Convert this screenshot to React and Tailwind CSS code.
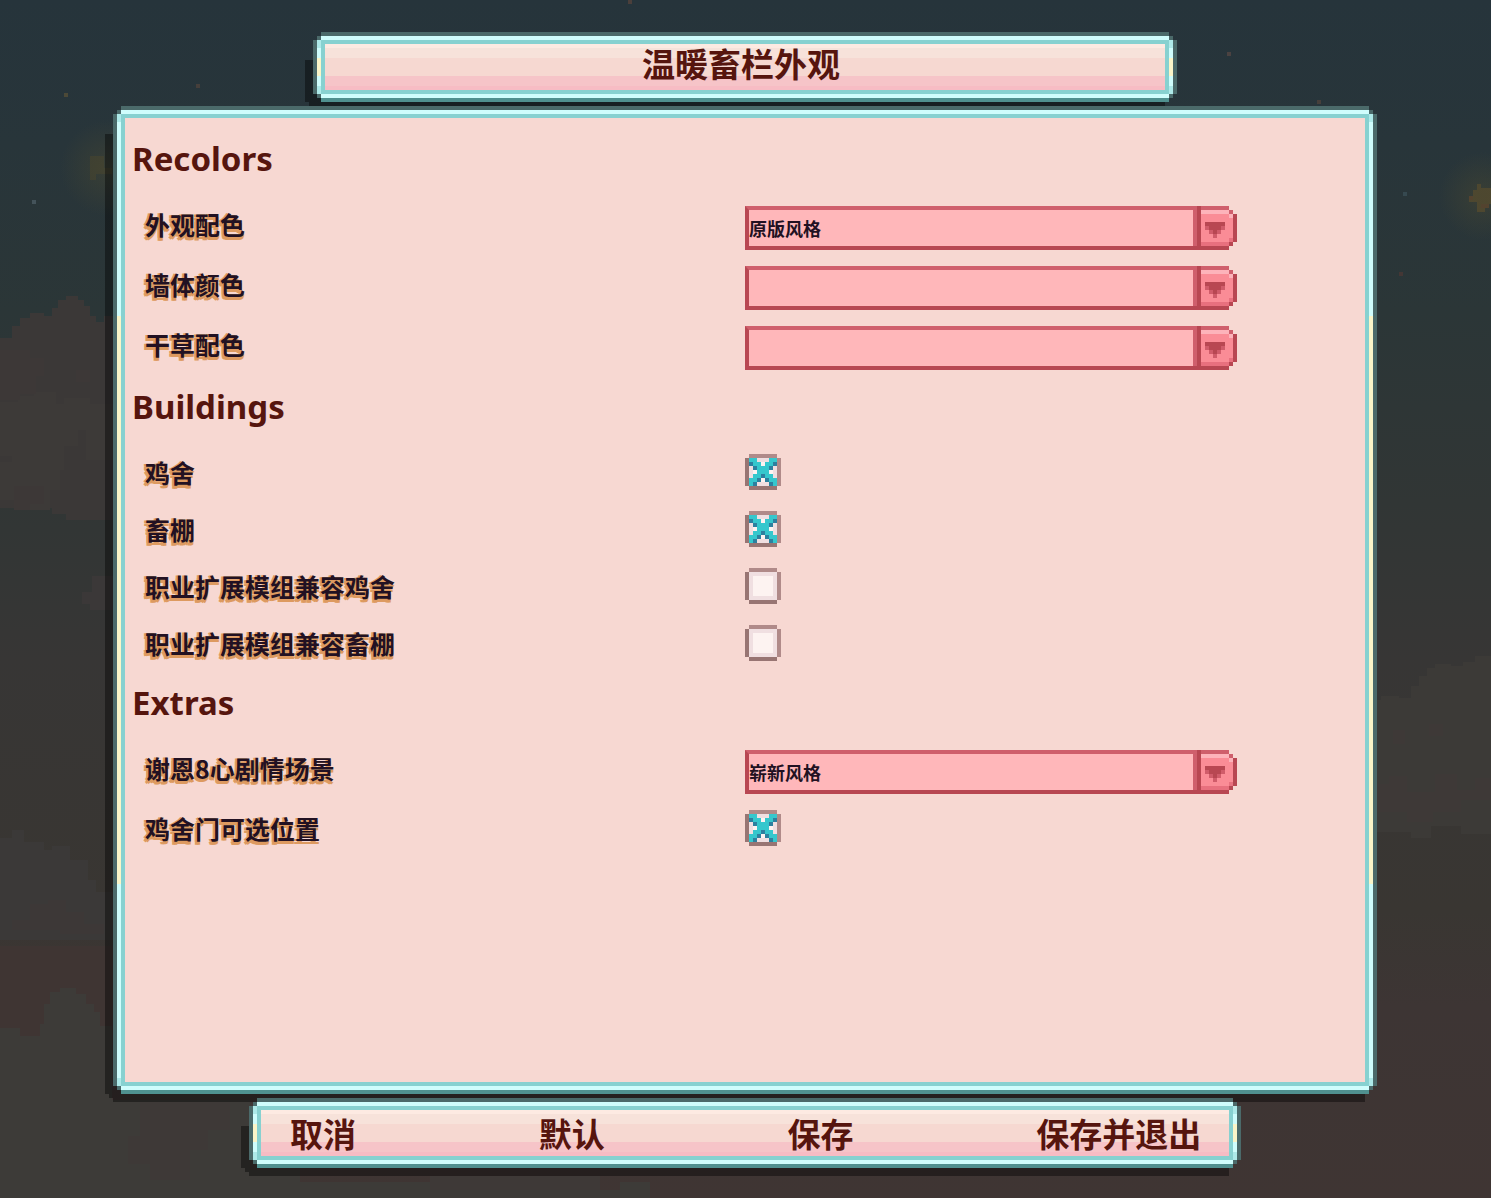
import { useState } from 'react'

const SECTIONS = [
  {
    title: 'Recolors',
    options: [
      { id: 'palette', type: 'select', label: '外观配色', value: '原版风格', choices: ['原版风格', '崭新风格'] },
      { id: 'wall', type: 'select', label: '墙体颜色', value: '', choices: ['', '原版风格'] },
      { id: 'hay', type: 'select', label: '干草配色', value: '', choices: ['', '原版风格'] },
    ],
  },
  {
    title: 'Buildings',
    options: [
      { id: 'coop', type: 'check', label: '鸡舍', value: true },
      { id: 'barn', type: 'check', label: '畜棚', value: true },
      { id: 'coop-compat', type: 'check', label: '职业扩展模组兼容鸡舍', value: false },
      { id: 'barn-compat', type: 'check', label: '职业扩展模组兼容畜棚', value: false },
    ],
  },
  {
    title: 'Extras',
    options: [
      { id: 'shane', type: 'select', label: '谢恩8心剧情场景', value: '崭新风格', choices: ['崭新风格', '原版风格'] },
      { id: 'coop-door', type: 'check', label: '鸡舍门可选位置', value: true },
    ],
  },
]

// t = teal, d = dark teal, anything else is left empty
const CROSS = [
  'tt...tt',
  'dtt.ttd',
  '.dtttd.',
  '..ttt..',
  '.ttdtt.',
  'ttd.dtt',
  'td...dt',
]

function Sky() {
  return (
    <div className="absolute inset-0 -z-20 overflow-hidden bg-[linear-gradient(to_bottom,#26343b_0%,#28353a_12%,#2b3637_26%,#313635_42%,#373635_55%,#393632_76%,#3d3534_84%,#3f3533_100%)]">
      <svg className="absolute left-0 top-0" width="700" height="1198" viewBox="0 0 700 1198" shapeRendering="crispEdges" aria-hidden="true">
        <path fill="#3b3837" d="M0 338H12V326H20V318H30V313H44V316H52V308H58V300H66V296H78V300H84V306H90V316H96V322H104V316H120V520H66V514H52V508H40V502H28V508H0Z" />
        <path fill="#3d3a38" d="M0 402H18V396H34V392H56V404H64V398H90V404H120V460H86V430H78V446H64V470H60V490H50V510H30V500H0V462H12V456H0Z" />
        <path fill="#3d3837" d="M0 350H30V358H44V376H36V394H20V400H0ZM76 370H90V382H76ZM14 486H44V504H30V510H14Z" />
        <path fill="#3b3838" d="M82 592H92V576H120V610H90V604H82Z" />
        <path fill="#3b3938" d="M0 838H12V830H24V842H44V850H52V846H70V860H88V880H96V892H120V940H0Z" />
        <path fill="#3d3837" d="M12 920H30V904H48V900H66V912H84V924H104V934H60V930H12Z" />
        <path fill="#3f3533" d="M0 946H120V1040H0Z" />
        <path fill="#3d3b38" d="M0 1028H20V1036H40V1024H44V1004H50V992H60V988H76V994H86V1004H94V1012H100V1026H112V1100H250V1170H300V1182H520V1190H620V1182H650V1198H0Z" />
        <path fill="#3e3937" d="M140 1102H230V1130H208V1150H190V1180H150V1164H128V1136H140ZM430 1176H600V1190H430Z" />
        <g fill="#4c4937">
          <path fill="#42422f" d="M90 156H104V168H112V174H96V180H90Z" opacity=".7" />
          <rect x="64" y="93" width="4" height="4" />
          <rect x="32" y="200" width="4" height="4" fill="#44535a" />
          <rect x="196" y="84" width="4" height="4" fill="#463f3b" />
          <rect x="628" y="0" width="4" height="4" fill="#4b3f3b" />
        </g>
      </svg>
      <svg className="absolute right-0 top-0" width="320" height="1198" viewBox="0 0 320 1198" shapeRendering="crispEdges" aria-hidden="true">
        <path fill="#3c3a37" d="M200 700H210V696H228V698H240V686H248V676H256V668H264V664H280V666H292V662H304V656H320V834H290V826H260V838H240V832H200Z" />
        <path fill="#3e3937" d="M204 784H218V776H236V792H264V774H286V790H304V778H320V800H290V812H262V822H236V812H204Z" />
        <path fill="#3e3937" d="M222 730H234V744H222ZM258 724H272V736H258Z" />
        <g fill="#50472f">
          <path d="M306 184H310V188H320V204H314V212H306V202H298V196H302V190H306Z" />
          <path fill="#59402e" d="M298 196H302V200H298ZM310 204H318V208H310Z" />
          <rect x="232" y="192" width="4" height="4" fill="#364950" />
          <rect x="228" y="272" width="4" height="4" fill="#443735" />
          <rect x="56" y="52" width="4" height="4" fill="#4b4241" />
          <rect x="146" y="100" width="4" height="4" fill="#463f3b" />
        </g>
      </svg>
      <div className="absolute left-[60px] top-[120px] h-24 w-24 bg-[radial-gradient(closest-side,#4a483080,transparent)]" />
      <div className="absolute -right-9 top-[152px] h-22 w-22 bg-[radial-gradient(closest-side,#4a483080,transparent)]" />
    </div>
  )
}

function Frame({ as: Tag = 'div', className = '', ring, fill, children }) {
  return (
    <Tag className={`relative isolate flex flex-col ${className}`}>
      <span className="absolute -bottom-2 -left-2 right-3 top-7 -z-10 bg-black/40 [clip-path:polygon(0_0,100%_0,100%_100%,8px_100%,8px_calc(100%-4px),4px_calc(100%-4px),4px_calc(100%-8px),0_calc(100%-8px))]" />
      <div className="flex grow flex-col bg-[linear-gradient(to_top,#50908f_4px,#4b6a6a_4px)] p-1 [clip-path:polygon(8px_0,calc(100%-8px)_0,calc(100%-8px)_4px,calc(100%-4px)_4px,calc(100%-4px)_8px,100%_8px,100%_calc(100%-8px),calc(100%-4px)_calc(100%-8px),calc(100%-4px)_calc(100%-4px),calc(100%-8px)_calc(100%-4px),calc(100%-8px)_100%,8px_100%,8px_calc(100%-4px),4px_calc(100%-4px),4px_calc(100%-8px),0_calc(100%-8px),0_8px,4px_8px,4px_4px,8px_4px)]">
        <div className={`flex grow flex-col p-1 [clip-path:polygon(4px_0,calc(100%-4px)_0,calc(100%-4px)_4px,100%_4px,100%_calc(100%-4px),calc(100%-4px)_calc(100%-4px),calc(100%-4px)_100%,4px_100%,4px_calc(100%-4px),0_calc(100%-4px),0_4px,4px_4px)] ${ring}`}>
          <div className="flex grow flex-col bg-[#87d1d0] p-1">
            <div className={`grow ${fill}`}>{children}</div>
          </div>
        </div>
      </div>
    </Tag>
  )
}

const BAR_RING = 'bg-[linear-gradient(to_bottom,#cffdfc_4px,#aeeae9_4px_12px,#cffdfc_12px_22px,#faf5c8_22px_40px,#cffdfc_40px_50px,#aeeae9_50px_58px,#cffdfc_58px)]'
const BAR_FILL = 'bg-[linear-gradient(to_bottom,#fdeae2_4px,#f7e2da_4px_14px,#f6d8d1_14px_32px,#f6c4c8_32px_42px,#f7bcc4_42px)]'
const PANEL_RING = 'bg-[linear-gradient(to_bottom,#cffdfc_4px,#aeeae9_4px_12px,#cffdfc_12px_21%,#faf5c8_21%_79%,#cffdfc_79%_calc(100%-12px),#aeeae9_calc(100%-12px)_calc(100%-4px),#cffdfc_calc(100%-4px))]'

function Dropdown({ id, value, choices, onChange }) {
  return (
    <div className="relative w-[492px] max-w-full">
      <select
        id={id}
        value={value}
        onChange={(e) => onChange(e.target.value)}
        className="block h-11 w-[calc(100%-8px)] appearance-none border-y-4 border-l-4 border-b-[#b84752] border-l-[#b84752] border-t-[#cf5f6c] bg-[#ffb7ba] pr-10 text-[18px] leading-9 font-bold text-[#221122] outline-none"
      >
        {choices.map((choice) => (
          <option key={choice} value={choice}>{choice}</option>
        ))}
      </select>
      <svg className="pointer-events-none absolute right-0 top-0" width="44" height="44" viewBox="0 0 11 11" shapeRendering="crispEdges" aria-hidden="true">
        <path fill="#fa8c96" d="M2 1H9V2H10V9H9V10H2Z" />
        <path fill="#fdb3ba" d="M2 1H9V2H2ZM9 2H10V3H9Z" />
        <path fill="#e8707e" d="M2 9H9V10H2ZM9 8H10V9H9Z" />
        <path fill="#d05c6a" d="M3 5H4V6H3ZM7 5H8V6H7ZM4 6H5V7H4ZM6 6H7V7H6ZM5 7H6V8H5Z" />
        <path fill="#cf5f6c" d="M0 0H9V1H0ZM0 1H1V10H0ZM9 1H10V2H9Z" />
        <path fill="#b84752" d="M1 0H2V10H9V11H0V10H1ZM10 2H11V9H10ZM9 9H10V10H9ZM3 4H8V5H3ZM4 5H7V6H4ZM5 6H6V7H5Z" />
      </svg>
    </div>
  )
}

function Checkbox({ id, checked, onChange }) {
  return (
    <div className="grid size-9">
      <svg className="[grid-area:1/1]" width="36" height="36" viewBox="0 0 9 9" shapeRendering="crispEdges" aria-hidden="true">
        <path fill="#b08a89" d="M1 0H8V1H1ZM8 1H9V8H8Z" />
        <path fill="#987573" d="M0 1H1V8H0ZM1 8H8V9H1Z" />
        <rect x="1" y="1" width="7" height="7" fill="#f0dfe1" />
        <rect x="2" y="2" width="5" height="5" fill="#fdf3f1" />
        {checked && CROSS.map((row, y) => row.split('').map((cell, x) => (
          cell === '.' ? null : (
            <rect key={`${x}-${y}`} x={x + 1} y={y + 1} width="1" height="1" fill={cell === 't' ? '#35c7cd' : '#2d809f'} />
          )
        )))}
      </svg>
      <input
        id={id}
        type="checkbox"
        checked={checked}
        onChange={(e) => onChange(e.target.checked)}
        className="size-9 appearance-none [grid-area:1/1]"
      />
    </div>
  )
}

function OptionRow({ option, value, onChange }) {
  const isSelect = option.type === 'select'
  return (
    <div className={`grid grid-cols-2 pt-2 ${isSelect ? 'h-[60px]' : 'h-[57px]'}`}>
      <div className="pl-5">
        <label
          htmlFor={option.id}
          className="block w-fit text-[25px] leading-9 font-bold text-[#221122] [text-shadow:-2px_3px_0_#dd9a60,0_3px_0_#dd9a60,-2px_0_0_#dd9a60]"
        >
          {option.label}
        </label>
      </div>
      {isSelect
        ? <Dropdown id={option.id} value={value} choices={option.choices} onChange={onChange} />
        : <Checkbox id={option.id} checked={value} onChange={onChange} />}
    </div>
  )
}

export default function App() {
  const [values, setValues] = useState(() => (
    Object.fromEntries(SECTIONS.flatMap((s) => s.options).map((o) => [o.id, o.value]))
  ))

  const setValue = (id, value) => setValues((prev) => ({ ...prev, [id]: value }))

  return (
    <div className="relative isolate flex min-h-screen flex-col gap-1 pb-[30px] pl-[113px] pr-[114px] pt-8 font-['Noto_Sans_CJK_SC',sans-serif] text-[#56150e]">
      <Sky />

      {/* Title bar */}
      <div className="px-[200px]">
        <Frame as="header" ring={BAR_RING} fill={BAR_FILL}>
          <h1 className="h-[46px] pr-2 text-center text-[33px] leading-[38px] font-bold">温暖畜栏外观</h1>
        </Frame>
      </div>

      {/* Options */}
      <Frame as="main" className="grow" ring={PANEL_RING} fill="bg-[#f7d8d2] pt-3">
        {SECTIONS.map((section) => (
          <section key={section.title}>
            <h2 className="h-[68px] pl-[7px] font-['Noto_Sans',sans-serif] text-[33px] leading-[58px] font-bold">{section.title}</h2>
            {section.options.map((option) => (
              <OptionRow
                key={option.id}
                option={option}
                value={values[option.id]}
                onChange={(value) => setValue(option.id, value)}
              />
            ))}
          </section>
        ))}
      </Frame>

      {/* Actions */}
      <div className="px-[136px]">
        <Frame as="footer" ring={BAR_RING} fill={BAR_FILL}>
          <div className="grid h-[46px] grid-cols-4 gap-x-14 pl-[29px] text-[33px] leading-[46px] font-bold">
            {['取消', '默认', '保存', '保存并退出'].map((action) => (
              <button key={action} type="button" className="text-left whitespace-nowrap">{action}</button>
            ))}
          </div>
        </Frame>
      </div>
    </div>
  )
}
